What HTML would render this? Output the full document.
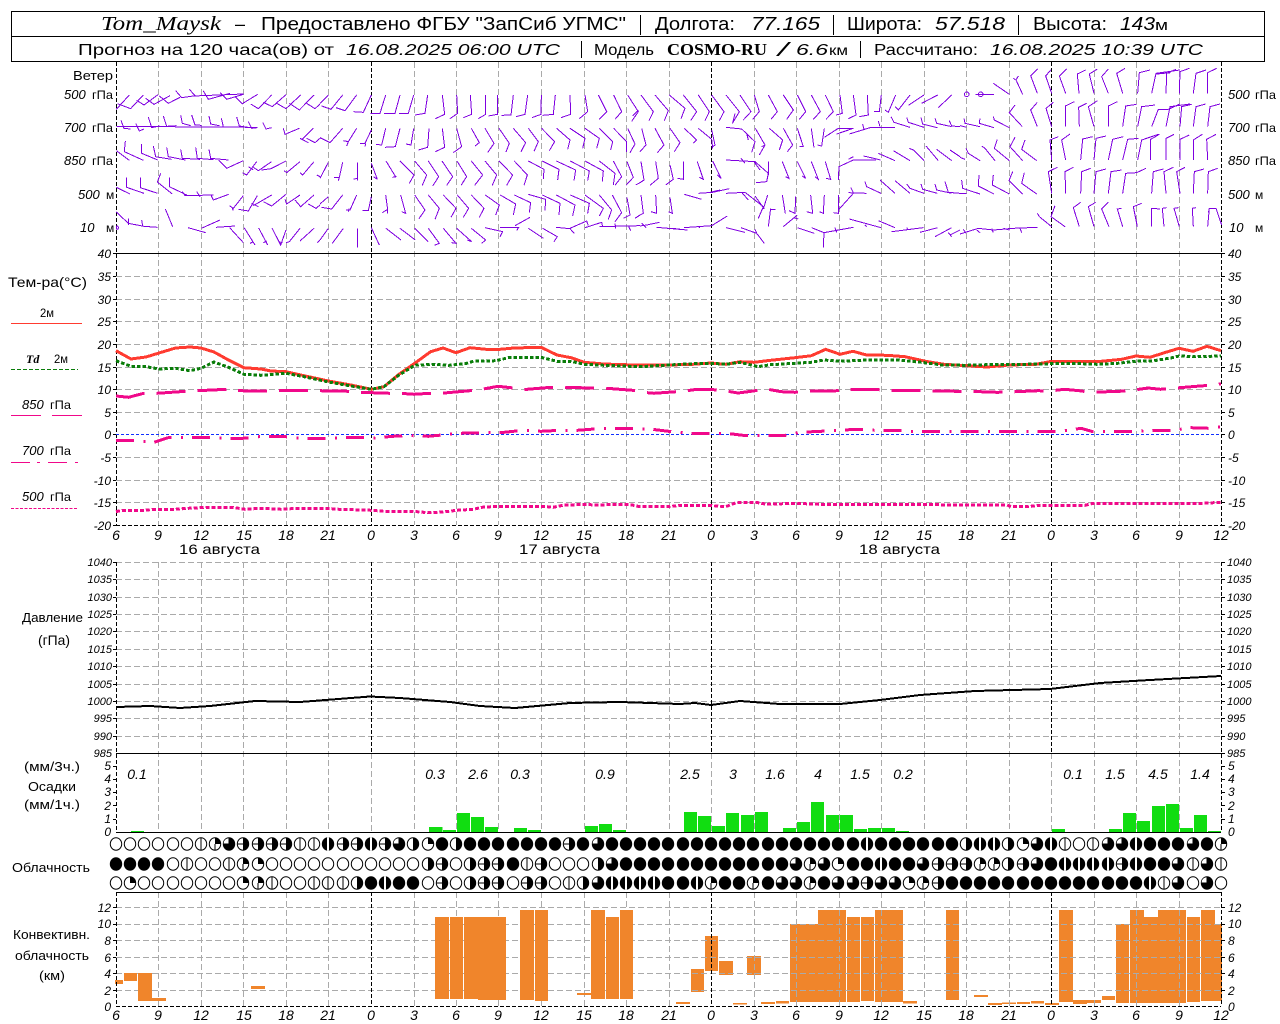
<!DOCTYPE html>
<html><head><meta charset="utf-8"><title>Tom_Maysk</title>
<style>
html,body{margin:0;padding:0;background:#fff}
svg{display:block}
text{font-family:"Liberation Sans",sans-serif;fill:#000}
.i{font-style:italic}
.s{font-family:"Liberation Serif",serif;font-style:italic}
.l{font-size:12px;font-style:italic}
.r{text-anchor:end}
.m{text-anchor:middle}
.x{font-size:14px;font-style:italic;text-anchor:middle}
.t{font-size:11px;font-style:italic}
.w{font-size:13px;font-style:italic}
.c{shape-rendering:crispEdges}
</style></head><body>
<svg width="1280" height="1024" viewBox="0 0 1280 1024" xmlns="http://www.w3.org/2000/svg">
<defs>
<g id="a"><ellipse rx="5.7" ry="6.2" fill="#fff" stroke="#000"/></g>
<g id="b"><ellipse rx="5.7" ry="6.2" fill="#fff" stroke="#000"/><path d="M0-6V6" stroke="#000"/></g>
<g id="c"><ellipse rx="5.7" ry="6.2" fill="#fff" stroke="#000"/><path d="M0 0V-6.2A5.7 6.2 0 0 1 5.7 0Z"/></g>
<g id="d"><ellipse rx="5.7" ry="6.2" fill="#fff" stroke="#000"/><path d="M0 0V-6.2A5.7 6.2 0 0 1 5.7 0Z"/><path d="M0 0V6" stroke="#000"/></g>
<g id="e"><ellipse rx="5.7" ry="6.2" fill="#fff" stroke="#000"/><path d="M0-6.2A5.7 6.2 0 0 1 0 6.2Z"/></g>
<g id="f"><ellipse rx="5.7" ry="6.2" fill="#fff" stroke="#000"/><path d="M0-6.2A5.7 6.2 0 0 1 0 6.2Z"/><path d="M-6 0H0" stroke="#000"/></g>
<g id="g"><ellipse rx="6.2" ry="6.7"/><path d="M-.5-.5V-5.8A5.2 5.2 0 0 0-5.4-.5Z" fill="#fff"/></g>
<g id="h"><ellipse rx="6.2" ry="6.7"/><rect x="-1" y="-6.7" width="2" height="13.4" fill="#fff"/></g>
<g id="i"><ellipse rx="6.2" ry="6.7"/></g>
</defs>

<!-- header -->
<rect x="11.5" y="11.5" width="1253" height="25" fill="none" stroke="#000"/>
<rect x="11.5" y="36.5" width="1253" height="25" fill="none" stroke="#000"/>
<g font-size="18">
<text class="s" x="101" y="30" textLength="120" lengthAdjust="spacingAndGlyphs" font-size="20">Tom_Maysk</text>
<text x="235" y="30">–</text>
<text x="261" y="30" textLength="365" lengthAdjust="spacingAndGlyphs">Предоставлено ФГБУ "ЗапСиб УГМС"</text>
<rect x="640" y="15" width="1" height="20"/>
<text x="655" y="30" textLength="80" lengthAdjust="spacingAndGlyphs">Долгота:</text>
<text class="i" x="751" y="30" textLength="69" lengthAdjust="spacingAndGlyphs">77.165</text>
<rect x="833" y="15" width="1" height="20"/>
<text x="847" y="30" textLength="75" lengthAdjust="spacingAndGlyphs">Широта:</text>
<text class="i" x="935" y="30" textLength="70" lengthAdjust="spacingAndGlyphs">57.518</text>
<rect x="1018" y="15" width="1" height="20"/>
<text x="1033" y="30" textLength="74" lengthAdjust="spacingAndGlyphs">Высота:</text>
<text class="i" x="1120" y="30" textLength="35" lengthAdjust="spacingAndGlyphs">143</text>
<text x="1155" y="30" font-size="15" textLength="13" lengthAdjust="spacingAndGlyphs">м</text>
</g>
<g font-size="16">
<text x="78" y="55" textLength="256" lengthAdjust="spacingAndGlyphs">Прогноз на 120 часа(ов)  от</text>
<text class="i" x="346" y="55" textLength="214" lengthAdjust="spacingAndGlyphs">16.08.2025 06:00 UTC</text>
<rect x="581" y="41" width="1" height="17"/>
<text x="594" y="55" textLength="60" lengthAdjust="spacingAndGlyphs">Модель</text>
<text x="667" y="55" textLength="100" lengthAdjust="spacingAndGlyphs" font-size="17" style="font-family:'Liberation Serif',serif;font-weight:bold">COSMO-RU</text>
<text x="778" y="56" font-size="19" class="i" textLength="10" lengthAdjust="spacingAndGlyphs">/</text>
<text class="i" x="796" y="55" textLength="32" lengthAdjust="spacingAndGlyphs">6.6</text>
<text x="829" y="55" font-size="14" textLength="19" lengthAdjust="spacingAndGlyphs">км</text>
<rect x="860" y="41" width="1" height="17"/>
<text x="874" y="55" textLength="104" lengthAdjust="spacingAndGlyphs">Рассчитано:</text>
<text class="i" x="990" y="55" textLength="213" lengthAdjust="spacingAndGlyphs">16.08.2025 10:39 UTC</text>
</g>

<!-- grid -->
<path class="c" fill="none" stroke="#aaa" stroke-dasharray="6 3" d="M158.5 62V525M201.5 62V525M243.5 62V525M286.5 62V525M328.5 62V525M414.5 62V525M456.5 62V525M498.5 62V525M541.5 62V525M584.5 62V525M626.5 62V525M669.5 62V525M754.5 62V525M796.5 62V525M839.5 62V525M881.5 62V525M924.5 62V525M966.5 62V525M1009.5 62V525M1094.5 62V525M1136.5 62V525M1179.5 62V525
M158.5 562V832M201.5 562V832M243.5 562V832M286.5 562V832M328.5 562V832M414.5 562V832M456.5 562V832M498.5 562V832M541.5 562V832M584.5 562V832M626.5 562V832M669.5 562V832M754.5 562V832M796.5 562V832M839.5 562V832M881.5 562V832M924.5 562V832M966.5 562V832M1009.5 562V832M1094.5 562V832M1136.5 562V832M1179.5 562V832M371.5 753V832M711.5 753V832M1051.5 753V832"/>

<!-- convective bars below grid (right part) -->
<g fill="#f0852b" class="c">
<rect x="676" y="1002" width="14" height="2"/><rect x="691" y="969" width="13" height="23"/><rect x="705" y="936" width="13" height="35"/><rect x="719" y="961" width="14" height="14"/><rect x="733" y="1003" width="14" height="1.5"/><rect x="747" y="956" width="14" height="19"/><rect x="761" y="1002" width="14" height="2"/><rect x="776" y="1001" width="13" height="2.5"/>
<rect x="790" y="924" width="28" height="78"/><rect x="818" y="910" width="28" height="92"/><rect x="847" y="917" width="13" height="85"/><rect x="861" y="917" width="13" height="84"/><rect x="875" y="910" width="28" height="92"/><rect x="903" y="1001" width="14" height="2.5"/>
<rect x="946" y="910" width="13" height="90"/><rect x="974" y="995" width="14" height="2"/><rect x="988" y="1003" width="14" height="2"/><rect x="1002" y="1002.5" width="14" height="1.5"/><rect x="1017" y="1002" width="13" height="2"/><rect x="1031" y="1001" width="13" height="2.5"/><rect x="1045" y="1003" width="14" height="2"/>
<rect x="1059" y="910" width="14" height="92"/><rect x="1073" y="1000" width="14" height="4"/><rect x="1087" y="1000" width="14" height="3"/><rect x="1102" y="996" width="13" height="4"/>
<rect x="1116" y="924" width="13" height="79"/><rect x="1130" y="910" width="14" height="93"/><rect x="1144" y="917" width="14" height="86"/><rect x="1158" y="910" width="28" height="93"/><rect x="1187" y="917" width="13" height="85"/><rect x="1201" y="910" width="14" height="91"/><rect x="1215" y="924" width="7" height="77"/>
</g>
<path class="c" fill="none" stroke="#aaa" stroke-dasharray="6 3" d="M158.5 892V1006M201.5 892V1006M243.5 892V1006M286.5 892V1006M328.5 892V1006M414.5 892V1006M456.5 892V1006M498.5 892V1006M541.5 892V1006M584.5 892V1006M626.5 892V1006M669.5 892V1006M754.5 892V1006M796.5 892V1006M839.5 892V1006M881.5 892V1006M924.5 892V1006M966.5 892V1006M1009.5 892V1006M1094.5 892V1006M1136.5 892V1006M1179.5 892V1006"/>
<path class="c" fill="none" stroke="#aaa" stroke-dasharray="6 3" d="M116 276.5H1221M116 299.5H1221M116 321.5H1221M116 344.5H1221M116 367.5H1221M116 389.5H1221M116 412.5H1221M116 457.5H1221M116 480.5H1221M116 502.5H1221
M116 562.5H1221M116 579.5H1221M116 597.5H1221M116 614.5H1221M116 631.5H1221M116 649.5H1221M116 666.5H1221M116 684.5H1221M116 701.5H1221M116 718.5H1221M116 736.5H1221
M116 907.5H1221M116 924.5H1221M116 940.5H1221M116 957.5H1221M116 973.5H1221M116 990.5H1221"/>
<!-- convective bars above grid (left part) -->
<g fill="#f0852b" class="c">
<rect x="115" y="980" width="8" height="4"/><rect x="124" y="973" width="13" height="8"/><rect x="138" y="973" width="14" height="28"/><rect x="152" y="998" width="14" height="3"/><rect x="251" y="986" width="14" height="3"/>
<rect x="435" y="917" width="14" height="82"/><rect x="450" y="917" width="13" height="82"/><rect x="464" y="917" width="14" height="82"/><rect x="478" y="917" width="28" height="83"/>
<rect x="520" y="910" width="14" height="90"/><rect x="535" y="910" width="13" height="91"/><rect x="577" y="993" width="14" height="2"/><rect x="591" y="910" width="14" height="89"/><rect x="606" y="917" width="13" height="82"/><rect x="620" y="910" width="13" height="89"/>
</g>
<!-- axes -->
<path class="c" fill="none" stroke="#000" stroke-dasharray="4 2" d="M116.5 62V525M116.5 562V832M116.5 892V1006M1221.5 62V525M1221.5 562V832M1221.5 892V1006M371.5 62V525M371.5 562V753M371.5 892V1006M711.5 62V525M711.5 562V753M711.5 892V1006M1051.5 62V525M1051.5 562V753M1051.5 892V1006M116 525.5H1221M116 1006.5H1221"/>
<path class="c" stroke="#000" d="M116 253.5H1221M116 753.5H1221M116 832.5H1221M116 892.5H1221"/>
<path class="c" stroke="#000" d="M113 253.5h3M113 276.5h3M113 299.5h3M113 321.5h3M113 344.5h3M113 367.5h3M113 389.5h3M113 412.5h3M113 434.5h3M113 457.5h3M113 480.5h3M113 502.5h3M1221 253.5h4M1221 276.5h4M1221 299.5h4M1221 321.5h4M1221 344.5h4M1221 367.5h4M1221 389.5h4M1221 412.5h4M1221 434.5h4M1221 457.5h4M1221 480.5h4M1221 502.5h4M1221 525.5h4M113 525.5h3
M113 562.5h3M113 579.5h3M113 597.5h3M113 614.5h3M113 631.5h3M113 649.5h3M113 666.5h3M113 684.5h3M113 701.5h3M113 718.5h3M113 736.5h3M1221 562.5h4M1221 579.5h4M1221 597.5h4M1221 614.5h4M1221 631.5h4M1221 649.5h4M1221 666.5h4M1221 684.5h4M1221 701.5h4M1221 718.5h4M1221 736.5h4M1221 753.5h4
M113 766.5h3M113 779.5h3M113 792.5h3M113 805.5h3M113 819.5h3M1221 766.5h4M1221 779.5h4M1221 792.5h4M1221 805.5h4M1221 819.5h4
M113 907.5h3M113 924.5h3M113 940.5h3M113 957.5h3M113 973.5h3M113 990.5h3M1221 907.5h4M1221 924.5h4M1221 940.5h4M1221 957.5h4M1221 973.5h4M1221 990.5h4"/>

<!-- wind barbs -->
<g class="c" fill="none" stroke="#7f00e0" stroke-width="3" stroke-linejoin="miter">
<g transform="translate(0,60) scale(.33333)">
<path d="M349 148L388 105M352 131L392 146L430 105M410 121L432 135L474 104M437 115L462 133L510 107M478 108L505 130L540 112M527 92L545 113L580 108L730 102M568 88L585 107M610 93L625 118L690 100M660 98L680 118L730 103M705 110L727 131L773 103M752 132L775 146L815 105M790 127L817 140L858 104M830 130L858 146L902 105M868 130L898 150L942 105M920 130L945 146L960 132"/>
<path d="M349 199L770 202M363 181L372 205L392 207M407 190L418 213L432 207M445 171L455 203L478 198M490 168L500 199L530 197M542 166L547 190L572 197M575 165L585 195L604 196M627 168L632 192L658 197M664 175L670 200M710 171L718 198L750 203M745 185L755 205L772 203M788 187L798 207L815 203M850 205L855 223L898 205M905 240L940 205M900 235L925 248M920 235L945 248L960 235"/>
<path d="M349 272L388 301M376 243L373 275L430 301M425 252L425 280L473 300M460 258L467 290L515 298M500 262L505 290L556 300M542 268L547 295L600 298M587 262L592 295L640 299M627 268L632 295L686 300M656 300L680 325L730 302M727 338L740 345L770 305M745 320L760 330M760 322L775 332L815 305M785 330L813 326L858 303M852 332L860 338L900 305M900 338L908 345L942 305M950 345L960 350"/>
<path d="M349 382L390 402M380 352L380 382L432 400M421 353L421 383L473 400M482 340L472 366L517 402M508 353L508 380L560 405M547 395L555 407L640 405M590 395L600 410M632 403L640 420L686 403M688 437L700 445L730 407M695 440L700 452M716 448L745 453L772 407M755 430L775 440M760 437L815 405M790 425L815 438L858 403M855 418L860 432L900 405M885 420L902 440L942 405M925 432L948 445L960 435"/>
<path d="M349 456L385 490L432 499L473 502M385 475L385 495M425 480L428 497M496 447L518 500M564 503L617 518M604 505L660 480M648 502L705 498M689 503L730 548M733 504L765 555M750 550L760 545M776 504L803 555M790 548L800 543M816 504L842 555L858 510M835 545L847 548M858 548L868 545L900 505M900 543L942 505M952 548L960 540"/>
<ellipse cx="352" cy="503" rx="3" ry="5"/>
</g>
<g transform="translate(320,60) scale(.33333)">
<path d="M0 130L25 105M5 138L33 148L68 105M48 143L75 152L110 105M100 155L130 157L154 105M152 160L180 160L197 105M192 160L225 160L240 105M237 160L265 160L281 105M285 165L315 160L323 105M346 176L374 163L367 105M390 176L413 160L410 105M430 173L455 163L451 105M475 176L497 163L497 105M505 168L532 163L532 105M545 166L573 165L580 105M588 170L615 163L623 105M636 173L663 163L664 105M668 166L700 163L706 105M723 173L752 163L750 105M778 176L803 155L795 105M838 178L860 155L835 105M885 178L905 155L881 105M935 184L955 155L923 105M938 168L955 150"/>
<path d="M0 233L30 248L68 205M70 242L85 245L110 205M80 258L85 245M120 250L135 250L154 210M135 260L137 250M168 253L185 255L197 205M195 262L226 260L240 205M258 252L273 255L281 205M295 270L323 262L327 205M346 275L374 262L367 205M400 278L425 260L410 205M465 258L478 248L454 205M503 278L522 250L495 205M558 276L568 250L537 205M603 275L617 248L580 205M642 274L655 245L625 205M688 272L704 245L665 205M743 268L750 240L710 205M788 265L795 235L750 205M830 265L838 235L795 205M872 270L878 245L838 205M920 276L920 245L881 205M930 278L945 252L923 205"/>
<path d="M0 355L25 307M42 352L58 352L68 307M55 362L58 352M100 358L112 355M112 362L112 307M154 310L172 358M160 350L172 358M198 303L228 352M217 352L230 350M240 303L282 345L268 370M284 303L320 345L307 376M325 303L356 350L338 378M366 303L398 350L380 376M411 303L440 350L423 376M454 303L488 345L464 376M495 303L530 345L517 376M537 303L578 345L560 376M583 303L622 345L612 376M625 303L672 328L670 357M667 303L717 328L713 360M709 303L767 330L762 362M751 303L808 333L803 362M795 303L850 333L847 365M838 303L885 340L880 375M880 303L905 350L885 376M921 305L940 352L918 376M947 375L960 368"/>
<path d="M0 432L25 410M5 442L35 447L68 405M78 450L90 450L110 405M85 455L88 445M127 452L145 452L154 410M187 458L203 448L197 405M203 448L203 460M242 405L257 460L245 455M284 405L315 450L297 476M325 405L358 445L345 478M370 405L408 445L393 472M412 405L446 445L430 472M454 405L492 445L478 472M496 405L538 435L527 465M541 405L587 432L580 465M583 405L632 428L628 458M625 403L677 418L675 452M667 405L720 430L717 465M709 405L765 435L758 468M751 405L808 430L803 460M795 405L850 445L838 468M838 405L875 450L865 478M877 405L905 458L885 485M921 412L930 465L910 475M945 475L960 465"/>
<path d="M0 540L25 505M37 550L70 505M112 505L112 563M154 503L178 555M198 505L243 540M240 505L286 540M284 505L325 545M325 505L358 550L343 556M370 505L408 550L395 548M410 505L455 545L442 540M454 505L497 540L485 550M495 503L548 515L540 530M540 502L596 502L590 512M585 497L630 472M625 505L670 535M668 505L712 530L702 545M708 502L750 506L763 520M750 505L800 483L805 497M795 503L845 487L848 500M838 500L960 497M885 490L887 505M925 497L932 512"/>
</g>
<g transform="translate(640,60) scale(.33333)">
<path d="M3 105L40 155L27 182M45 105L85 152L73 182M88 105L135 145L123 176M130 105L170 155L152 182M175 105L208 155L195 182M215 105L252 155L238 182M258 105L298 155L277 190M285 160L278 190M300 105L333 155L310 180M343 105L358 155L338 178M385 105L412 155L393 178M430 105L460 150L440 178M472 105L497 155L478 178M514 105L541 155L520 178M556 105L580 155L558 178M600 105L607 160L588 165M640 105L648 165L625 176M682 105L685 165L658 170M724 105L718 155L702 155M767 105L745 157L735 150M810 105L775 150L765 140M852 105L805 136M893 105L845 130M935 105L895 143"/>
<path d="M5 205L18 255L0 275M45 205L72 255L52 278M90 205L120 248L103 275M133 205L170 240L160 250M175 205L215 238L218 265M215 210L225 255L215 262M258 202L305 207L345 245L335 277M320 220L325 240M346 205L375 255L358 285M365 260L375 255M388 205L428 240L418 270M430 205L458 255L442 275M472 205L490 260L478 260M514 205L522 263M553 205L545 258L532 255M553 232L595 205L640 205M590 222L640 205M628 222L690 203L765 203M668 192L672 208M715 183L720 200M753 170L762 187L810 202M800 172L805 187L852 202M843 172L848 192L892 203M885 175L890 190L935 200M928 182L935 198L960 200"/>
<path d="M3 305L12 360L0 368M47 305L55 355L30 376M90 315L100 358L77 375M130 305L130 358L113 355M172 305L190 358L178 352M218 303L243 355L232 345M258 300L345 305L385 340L380 365L348 368M303 295L315 310M342 305L360 330M385 305L385 345M427 305L447 355L437 350M472 305L497 355L487 348M514 305L535 358L525 350M556 305L572 358L558 355M595 360L597 320L640 300L708 300M625 298L640 290M670 288L680 290L722 300M715 280L765 302M760 272L765 275L810 302M808 265L820 270L852 302M858 258L895 302M890 268L935 302M930 270L960 290"/>
<path d="M3 405L10 460L0 465M47 405L50 460L33 455M90 412L97 460L85 455M133 403L185 418M175 400L218 397L268 386M210 397L240 390M258 400L315 397L370 440L355 475M305 397L325 420M345 408L373 447M383 405L370 447M392 445L385 500M392 448L407 448M427 405L436 460M467 410L465 460L447 452M512 405L518 460L500 455M553 405L550 460L538 455M640 400L595 450L595 460L580 458M595 405L595 450M625 398L680 400M632 382L640 398M675 365L680 380L723 400M720 360L765 400M765 362L810 400M800 372L810 385L852 400M843 372L848 388L892 400M885 372L890 390L935 400M915 365L925 397L960 400"/>
<path d="M0 498L20 495L58 487M5 490L18 503M50 502L142 510M85 505L120 507M132 503L215 497L262 468M175 500L180 503M258 503L315 517M303 503L350 520L373 550M345 508L350 520M472 503L523 520M515 503L552 518L550 563M552 518L640 502M585 503L590 517M430 500L472 465M460 473L475 477M628 477L723 503M675 495L680 500M715 482L765 503M755 515L850 503M800 503L805 510M840 517L893 503M885 530L935 503M925 518L935 530M930 525L960 510"/>
</g>
<g transform="translate(960,60) scale(.33333)">
<circle cx="20" cy="103" r="7"/><circle cx="62" cy="103" r="7"/>
<path d="M47 103L102 103M100 70L148 103M188 103L168 60L175 48M160 55L168 60M232 100L212 47L233 27M275 100L257 48L272 30M317 100L298 48L320 27M357 100L352 42L377 30M402 100L388 42L412 27M445 100L425 50L445 27M488 100L470 40L495 25M533 100L538 38L570 30M575 100L588 40L660 30M590 42L632 38M618 100L620 40L648 28M658 100L660 35L688 25M700 100L708 40L738 30M743 100L743 38L770 25"/>
<path d="M187 200L148 158L165 135M232 200L212 150L232 127M275 200L258 145L280 127M317 200L316 138L343 125M358 200L356 142L380 130M402 200L385 140L412 122M445 200L445 138L472 125M488 200L497 138L530 133M533 200L545 140L585 135M575 200L595 148L625 148L660 132M618 200L630 140L690 132M660 200L665 140L695 133M700 200L708 140L737 132M743 200L750 140L780 132M100 170L103 180L148 203M60 175L58 190L102 203M12 175L15 190L60 200M0 197L20 202"/>
<path d="M0 292L15 298M18 265L25 280L60 302M65 258L75 265L105 302M112 238L103 265L148 302M165 232L150 260L188 302M195 240L185 268L230 302M275 300L270 240L295 230M317 300L305 240L330 222M362 300L368 237L398 230M402 300L408 235L438 228M445 300L458 238L490 230M488 300L503 238L535 235M533 300L545 240L595 223M572 300L572 238L598 223M618 300L618 235L642 223M660 300L660 238L688 225M700 300L700 240L727 223M743 300L740 238L768 223"/>
<path d="M0 400L20 400M5 360L8 385L60 402M57 345L55 378L102 402M100 345L97 375L148 402M158 335L147 362L188 402M193 338L185 370L230 402M275 400L265 335L292 322M317 400L315 335L340 322M362 400L365 335L392 325M402 400L408 335L438 327M445 400L453 335L485 330M488 400L497 340L530 338L558 325M575 400L580 335L610 327M618 400L612 335L640 322M660 400L650 335L675 322M700 400L703 335L732 327M743 400L745 335L773 325"/>
<path d="M0 522L55 505L100 510L160 505L232 502M50 510L60 518M95 505L100 518M130 505L148 510M180 505L185 518M10 508L18 520M232 460L238 470L275 500M285 437L273 470L315 500M358 500L340 443L362 427M402 500L385 440L407 427M447 500L425 447L445 427M488 500L472 447L485 445M532 500L520 440L545 430M575 500L575 445L600 447M612 500L607 445L620 443M658 500L642 445L655 443M700 500L697 445L708 443M743 500L748 445L768 445L785 495M748 445L745 458"/>
</g>
</g>

<!-- temperature curves -->
<path class="c" d="M116 434.5H1221" stroke="#1030ff" stroke-dasharray="3 2"/>
<g class="c">
<polyline fill="none" stroke="#ff3b30" stroke-width="3" points="116,350.7 131,359 146,357 159,353 175.5,348 190,347 201,348 214,352 228.5,360 244,367.7 261,369 271,371 286,371.7 304,375.7 328.5,381 351,385 371.4,389.3 384,386.7 398,375 414.7,363.3 430.6,351.7 443,348 456,352.7 470,347.7 486,349.3 500,349.3 514,348 541,347.3 557,355 571,357.7 584.5,362.3 604,364 624,364.7 640,365 669,365 693,364.3 711,363 726,364.3 740,361.7 754,362.3 770.6,360.3 795,357.7 811.4,355.7 825.7,349.3 840,354.3 853,351.3 866.5,355 887,355.3 905,356.7 925.7,361.3 944,364.3 966.5,365.7 987,367 1009.4,365 1036,364.3 1051.4,361.3 1072.7,361.3 1097,361.7 1121.6,359.3 1136,356 1150,357.3 1164.5,352.7 1179,348.3 1193,351.3 1207,346.3 1221,350.7"/>
<polyline fill="none" stroke="#0a7d0a" stroke-width="3" stroke-dasharray="3.5 2" points="116,360.7 131,366.3 146,366.7 159,369 175.5,368.3 190,370.7 201,368.3 214,362 228.5,367.3 244,374.3 261,375.3 286,373.3 304,376.7 328.5,382 351,386 371.4,389.3 384,386.7 398,375.7 414.7,365.3 432.6,364.3 449,365.3 465,363.7 473.5,361.3 496,360.7 510,357.3 541,357.3 557,361.3 571,361.3 584.5,364.3 604,365.3 640,366.7 669,365 693,363.7 711,363.3 726,364.3 740,362.3 758,366.7 770.6,364.7 795,363.3 811,362.3 824,360 840,361.3 868.6,360 897,360 921.6,362.3 942,365 966.5,365.3 987,364.7 1009.4,364.7 1051.4,363.7 1072.7,363.3 1097,364.3 1117.6,363.3 1136,361.3 1154,360.7 1170.6,358 1179,356 1195,356.7 1221,356"/>
<polyline fill="none" stroke="#f0088a" stroke-width="3" stroke-dasharray="29 12" points="116,396 128.6,397.3 143.7,393.3 157,393.3 185.7,391.3 198,390.7 226.5,389.3 237.5,390.7 267,391 278,390.7 308,390.7 319,390.7 349,391.3 360,392.3 390,393.3 400,393.3 414,394.3 429.4,393.3 441,393.3 470,390.7 481.6,389.3 498,386.3 511,387.7 522.4,389.7 551,387.3 562.4,387.3 592,388 603,388 632.6,390.3 643,392.3 654,393.3 672,392 685,391 697,389.3 713.5,389.7 726,391 738,393 753.5,391 766.5,389 781,391.7 795,392.3 805,391 834,391 848,389.3 875,389.3 887,390.7 917.5,390.7 928,390.7 956,391.3 968.6,391.3 997,392.3 1009.4,392 1038,390.7 1050,391 1064.5,389.3 1079,390.7 1091,392.3 1119.6,391.3 1132,390.3 1148,388 1160.4,389.3 1172.6,388.3 1200,386 1213.5,385 1221,383.7"/>
<polyline fill="none" stroke="#f0088a" stroke-width="3" stroke-dasharray="18 9.5 2 9" points="116,440.3 134,440.3 154,442.3 169.4,437.3 188,437.3 206,437.3 225,438.3 243,438.3 263,436.3 281.6,436.3 301,438.3 317.6,438.7 339,437.7 355,437.3 374.7,438 392.6,436.3 411.4,435.7 428.6,436.3 449,434.3 465.3,433 486,432.7 504,432.3 523,430.3 541,431.3 560,430.3 577.6,430.3 598,428.7 614,428.7 640,428.7 652,429.3 672,431.7 689,433.3 709,433.3 726.5,433.3 746,435.7 762.4,435.7 783.7,435.7 800,432.3 821,431.3 837.5,430.3 858,429.3 874.7,430.3 895,430.3 911.4,431.3 1060.4,431.3 1081,428.3 1093,431.7 1134,431.3 1154,430.7 1170.6,430.7 1191,427.7 1209,428.3 1221,426.7"/>
<polyline fill="none" stroke="#f0088a" stroke-width="3" stroke-dasharray="4 2" points="116,511.7 122,510.3 145,510.3 153,509.3 175.5,509.3 188,508.3 206,507.3 232.6,507.3 245,509.3 261,508.3 281.6,509.3 298,508.3 326.5,508.3 339,509.3 371.4,510.3 383.7,511.3 412,511.3 428.6,512.7 443,512 457,510.3 473.5,509.3 481.6,507.3 498,506.3 547,506.7 553,507.3 563,505.3 583.7,504.3 600,505.3 612,504.3 628.6,504.3 640,506.7 668.6,506.7 681,505.3 709.4,505.3 725.7,506.7 736,502.7 756,502.3 766.5,504.3 795,503.3 819.6,504.3 1007,505 1011,506.7 1028,506.7 1038,505.3 1085,505.3 1093,503.3 1203,503.3 1221,502.3"/>

<!-- pressure -->
<polyline fill="none" stroke="#000" stroke-width="2" points="116,707 150,706 180,708 210,706 255,701 300,702 370,696.5 400,698 450,702 480,706 515,708 570,703 620,702 680,704 695,703 711,705 740,701 780,704 840,704 880,700 920,695 975,691 1050,689 1100,683 1150,680 1221,676"/>
</g>

<!-- precipitation bars -->
<g fill="#11dd11" class="c">
<rect x="131" y="831" width="13" height="1.5"/><rect x="429" y="827" width="13.5" height="5.5"/><rect x="443" y="830" width="13" height="2.5"/><rect x="457" y="813" width="13" height="19.5"/><rect x="471" y="817" width="13" height="15.5"/><rect x="485" y="827" width="13" height="5.5"/><rect x="514" y="828" width="13" height="4.5"/><rect x="528" y="830" width="13" height="2.5"/><rect x="585" y="826" width="13" height="6.5"/><rect x="599" y="824" width="13" height="8.5"/><rect x="613" y="830" width="13" height="2.5"/>
<rect x="684" y="812" width="13" height="20.5"/><rect x="698" y="816" width="13" height="16.5"/><rect x="712" y="826" width="13" height="6.5"/><rect x="726" y="813" width="13" height="19.5"/><rect x="741" y="815" width="13" height="17.5"/><rect x="755" y="812" width="13" height="20.5"/><rect x="783" y="828" width="13" height="4.5"/><rect x="797" y="822" width="13" height="10.5"/><rect x="811" y="802" width="13" height="30.5"/><rect x="826" y="815" width="13" height="17.5"/><rect x="840" y="815" width="13" height="17.5"/><rect x="854" y="829" width="13" height="3.5"/><rect x="868" y="828" width="13" height="4.5"/><rect x="882" y="828" width="13" height="4.5"/><rect x="896" y="831" width="13" height="1.5"/>
<rect x="1052" y="829" width="13" height="3.5"/><rect x="1109" y="829" width="13" height="3.5"/><rect x="1123" y="813" width="13" height="19.5"/><rect x="1137" y="821" width="13" height="11.5"/><rect x="1152" y="806" width="13" height="26.5"/><rect x="1166" y="804" width="13" height="28.5"/><rect x="1180" y="828" width="13" height="4.5"/><rect x="1194" y="815" width="13" height="17.5"/><rect x="1208" y="831" width="13" height="1.5"/>
</g>
<path class="c" stroke="#000" d="M116 832.5H1221"/>

<!-- cloud rows -->
<g transform="translate(0,844)"><use href="#a" x="116"/><use href="#a" x="130"/><use href="#a" x="144"/><use href="#a" x="158"/><use href="#a" x="173"/><use href="#a" x="187"/><use href="#b" x="201"/><use href="#d" x="215"/><use href="#g" x="229"/><use href="#f" x="243"/><use href="#f" x="258"/><use href="#f" x="272"/><use href="#f" x="286"/><use href="#b" x="300"/><use href="#b" x="314"/><use href="#h" x="328"/><use href="#f" x="343"/><use href="#f" x="357"/><use href="#h" x="371"/><use href="#f" x="385"/><use href="#g" x="399"/><use href="#e" x="413"/><use href="#c" x="428"/><use href="#i" x="442"/><use href="#e" x="456"/><use href="#i" x="470"/><use href="#i" x="484"/><use href="#i" x="498"/><use href="#i" x="513"/><use href="#i" x="527"/><use href="#i" x="541"/><use href="#i" x="555"/><use href="#f" x="569"/><use href="#i" x="583"/><use href="#g" x="598"/><use href="#i" x="612"/><use href="#i" x="626"/><use href="#i" x="640"/><use href="#i" x="654"/><use href="#i" x="668"/><use href="#i" x="683"/><use href="#i" x="697"/><use href="#i" x="711"/><use href="#i" x="725"/><use href="#i" x="739"/><use href="#i" x="753"/><use href="#i" x="768"/><use href="#i" x="782"/><use href="#i" x="796"/><use href="#i" x="810"/><use href="#i" x="824"/><use href="#i" x="838"/><use href="#i" x="853"/><use href="#h" x="867"/><use href="#i" x="881"/><use href="#i" x="895"/><use href="#i" x="909"/><use href="#i" x="923"/><use href="#i" x="938"/><use href="#i" x="952"/><use href="#e" x="966"/><use href="#h" x="980"/><use href="#h" x="994"/><use href="#e" x="1008"/><use href="#c" x="1023"/><use href="#g" x="1037"/><use href="#h" x="1051"/><use href="#b" x="1065"/><use href="#a" x="1079"/><use href="#b" x="1093"/><use href="#g" x="1108"/><use href="#g" x="1122"/><use href="#h" x="1136"/><use href="#i" x="1150"/><use href="#i" x="1164"/><use href="#i" x="1178"/><use href="#g" x="1193"/><use href="#i" x="1207"/><use href="#d" x="1221"/></g>
<g transform="translate(0,864)"><use href="#i" x="116"/><use href="#i" x="130"/><use href="#i" x="144"/><use href="#i" x="158"/><use href="#a" x="173"/><use href="#b" x="187"/><use href="#a" x="201"/><use href="#a" x="215"/><use href="#b" x="229"/><use href="#d" x="243"/><use href="#c" x="258"/><use href="#a" x="272"/><use href="#a" x="286"/><use href="#a" x="300"/><use href="#a" x="314"/><use href="#a" x="328"/><use href="#a" x="343"/><use href="#a" x="357"/><use href="#a" x="371"/><use href="#a" x="385"/><use href="#a" x="399"/><use href="#a" x="413"/><use href="#e" x="428"/><use href="#f" x="442"/><use href="#a" x="456"/><use href="#e" x="470"/><use href="#f" x="484"/><use href="#f" x="498"/><use href="#i" x="513"/><use href="#b" x="527"/><use href="#f" x="541"/><use href="#a" x="555"/><use href="#a" x="569"/><use href="#a" x="583"/><use href="#e" x="598"/><use href="#g" x="612"/><use href="#i" x="626"/><use href="#i" x="640"/><use href="#i" x="654"/><use href="#i" x="668"/><use href="#i" x="683"/><use href="#i" x="697"/><use href="#i" x="711"/><use href="#i" x="725"/><use href="#i" x="739"/><use href="#i" x="753"/><use href="#i" x="768"/><use href="#i" x="782"/><use href="#g" x="796"/><use href="#d" x="810"/><use href="#g" x="824"/><use href="#c" x="838"/><use href="#i" x="853"/><use href="#i" x="867"/><use href="#h" x="881"/><use href="#i" x="895"/><use href="#i" x="909"/><use href="#g" x="923"/><use href="#f" x="938"/><use href="#f" x="952"/><use href="#f" x="966"/><use href="#d" x="980"/><use href="#d" x="994"/><use href="#e" x="1008"/><use href="#f" x="1023"/><use href="#g" x="1037"/><use href="#i" x="1051"/><use href="#h" x="1065"/><use href="#h" x="1079"/><use href="#h" x="1093"/><use href="#h" x="1108"/><use href="#f" x="1122"/><use href="#h" x="1136"/><use href="#i" x="1150"/><use href="#i" x="1164"/><use href="#g" x="1178"/><use href="#b" x="1193"/><use href="#g" x="1207"/><use href="#b" x="1221"/></g>
<g transform="translate(0,883)"><use href="#a" x="116"/><use href="#c" x="130"/><use href="#a" x="144"/><use href="#a" x="158"/><use href="#a" x="173"/><use href="#a" x="187"/><use href="#a" x="201"/><use href="#a" x="215"/><use href="#a" x="229"/><use href="#c" x="243"/><use href="#d" x="258"/><use href="#b" x="272"/><use href="#a" x="286"/><use href="#a" x="300"/><use href="#b" x="314"/><use href="#b" x="328"/><use href="#b" x="343"/><use href="#e" x="357"/><use href="#i" x="371"/><use href="#h" x="385"/><use href="#i" x="399"/><use href="#i" x="413"/><use href="#a" x="428"/><use href="#f" x="442"/><use href="#a" x="456"/><use href="#e" x="470"/><use href="#f" x="484"/><use href="#f" x="498"/><use href="#a" x="513"/><use href="#f" x="527"/><use href="#f" x="541"/><use href="#a" x="555"/><use href="#b" x="569"/><use href="#e" x="583"/><use href="#g" x="598"/><use href="#h" x="612"/><use href="#h" x="626"/><use href="#h" x="640"/><use href="#h" x="654"/><use href="#i" x="668"/><use href="#i" x="683"/><use href="#h" x="697"/><use href="#d" x="711"/><use href="#i" x="725"/><use href="#i" x="739"/><use href="#d" x="753"/><use href="#i" x="768"/><use href="#g" x="782"/><use href="#g" x="796"/><use href="#d" x="810"/><use href="#i" x="824"/><use href="#g" x="838"/><use href="#g" x="853"/><use href="#f" x="867"/><use href="#g" x="881"/><use href="#g" x="895"/><use href="#c" x="909"/><use href="#d" x="923"/><use href="#f" x="938"/><use href="#i" x="952"/><use href="#i" x="966"/><use href="#i" x="980"/><use href="#i" x="994"/><use href="#i" x="1008"/><use href="#i" x="1023"/><use href="#i" x="1037"/><use href="#i" x="1051"/><use href="#i" x="1065"/><use href="#i" x="1079"/><use href="#i" x="1093"/><use href="#i" x="1108"/><use href="#i" x="1122"/><use href="#i" x="1136"/><use href="#h" x="1150"/><use href="#b" x="1164"/><use href="#g" x="1178"/><use href="#a" x="1193"/><use href="#g" x="1207"/><use href="#a" x="1221"/></g>

<!-- wind labels -->
<text x="73" y="80" textLength="40" lengthAdjust="spacingAndGlyphs" font-size="13">Ветер</text>
<text x="64" y="99" class="w">500</text><text x="92" y="99" font-size="12" textLength="21" lengthAdjust="spacingAndGlyphs">гПа</text>
<text x="64" y="132" class="w">700</text><text x="92" y="132" font-size="12" textLength="21" lengthAdjust="spacingAndGlyphs">гПа</text>
<text x="64" y="165" class="w">850</text><text x="92" y="165" font-size="12" textLength="21" lengthAdjust="spacingAndGlyphs">гПа</text>
<text x="78" y="199" class="w">500</text><text x="106" y="199" font-size="12">м</text>
<text x="80" y="232" class="w">10</text><text x="106" y="232" font-size="12">м</text>
<text x="1228" y="99" class="w">500</text><text x="1255" y="99" font-size="12" textLength="21" lengthAdjust="spacingAndGlyphs">гПа</text>
<text x="1228" y="132" class="w">700</text><text x="1255" y="132" font-size="12" textLength="21" lengthAdjust="spacingAndGlyphs">гПа</text>
<text x="1228" y="165" class="w">850</text><text x="1255" y="165" font-size="12" textLength="21" lengthAdjust="spacingAndGlyphs">гПа</text>
<text x="1228" y="199" class="w">500</text><text x="1255" y="199" font-size="12">м</text>
<text x="1229" y="232" class="w">10</text><text x="1255" y="232" font-size="12">м</text>

<!-- temperature axis labels -->
<g class="l r">
<text class="l r" x="111" y="258">40</text><text class="l r" x="111" y="281">35</text><text class="l r" x="111" y="304">30</text><text class="l r" x="111" y="326">25</text><text class="l r" x="111" y="349">20</text><text class="l r" x="111" y="372">15</text><text class="l r" x="111" y="394">10</text><text class="l r" x="111" y="417">5</text><text class="l r" x="111" y="439">0</text><text class="l r" x="111" y="462">-5</text><text class="l r" x="111" y="485">-10</text><text class="l r" x="111" y="507">-15</text><text class="l r" x="111" y="530">-20</text>
</g>
<text class="l" x="1228" y="258">40</text><text class="l" x="1228" y="281">35</text><text class="l" x="1228" y="304">30</text><text class="l" x="1228" y="326">25</text><text class="l" x="1228" y="349">20</text><text class="l" x="1228" y="372">15</text><text class="l" x="1228" y="394">10</text><text class="l" x="1228" y="417">5</text><text class="l" x="1228" y="439">0</text><text class="l" x="1228" y="462">-5</text><text class="l" x="1228" y="485">-10</text><text class="l" x="1228" y="507">-15</text><text class="l" x="1228" y="530">-20</text>

<!-- temperature legend -->
<text x="8" y="287" font-size="14" textLength="79" lengthAdjust="spacingAndGlyphs">Тем-ра(°C)</text>
<text x="40" y="317" font-size="12" textLength="14" lengthAdjust="spacingAndGlyphs">2м</text>
<path class="c" d="M11 323.5H82" stroke="#ff3b30"/>
<text x="26" y="363" font-size="12" class="s" font-weight="bold">Td</text><text x="54" y="363" font-size="12" textLength="14" lengthAdjust="spacingAndGlyphs">2м</text>
<path class="c" d="M11 369.5H78" stroke="#0a7d0a" stroke-dasharray="4 2"/>
<text x="22" y="409" class="w">850</text><text x="50" y="409" font-size="12" textLength="21" lengthAdjust="spacingAndGlyphs">гПа</text>
<path class="c" d="M11 415.5H41M52 415.5H82" stroke="#f0088a"/>
<text x="22" y="455" class="w">700</text><text x="50" y="455" font-size="12" textLength="21" lengthAdjust="spacingAndGlyphs">гПа</text>
<path class="c" d="M11 462.5H30M37 462.5H40M48 462.5H67M75 462.5H78" stroke="#f0088a"/>
<text x="22" y="501" class="w">500</text><text x="50" y="501" font-size="12" textLength="21" lengthAdjust="spacingAndGlyphs">гПа</text>
<path class="c" d="M11 508.5H78" stroke="#f0088a" stroke-dasharray="3 1.5"/>

<!-- x labels -->
<g>
<text class="x" x="116" y="540">6</text><text class="x" x="158" y="540">9</text><text class="x" x="201" y="540">12</text><text class="x" x="244" y="540">15</text><text class="x" x="286" y="540">18</text><text class="x" x="328" y="540">21</text><text class="x" x="371" y="540">0</text><text class="x" x="414" y="540">3</text><text class="x" x="456" y="540">6</text><text class="x" x="498" y="540">9</text><text class="x" x="541" y="540">12</text><text class="x" x="584" y="540">15</text><text class="x" x="626" y="540">18</text><text class="x" x="669" y="540">21</text><text class="x" x="711" y="540">0</text><text class="x" x="754" y="540">3</text><text class="x" x="796" y="540">6</text><text class="x" x="839" y="540">9</text><text class="x" x="881" y="540">12</text><text class="x" x="924" y="540">15</text><text class="x" x="966" y="540">18</text><text class="x" x="1009" y="540">21</text><text class="x" x="1051" y="540">0</text><text class="x" x="1094" y="540">3</text><text class="x" x="1136" y="540">6</text><text class="x" x="1179" y="540">9</text><text class="x" x="1221" y="540">12</text>
<text class="x" x="116" y="1020">6</text><text class="x" x="158" y="1020">9</text><text class="x" x="201" y="1020">12</text><text class="x" x="244" y="1020">15</text><text class="x" x="286" y="1020">18</text><text class="x" x="328" y="1020">21</text><text class="x" x="371" y="1020">0</text><text class="x" x="414" y="1020">3</text><text class="x" x="456" y="1020">6</text><text class="x" x="498" y="1020">9</text><text class="x" x="541" y="1020">12</text><text class="x" x="584" y="1020">15</text><text class="x" x="626" y="1020">18</text><text class="x" x="669" y="1020">21</text><text class="x" x="711" y="1020">0</text><text class="x" x="754" y="1020">3</text><text class="x" x="796" y="1020">6</text><text class="x" x="839" y="1020">9</text><text class="x" x="881" y="1020">12</text><text class="x" x="924" y="1020">15</text><text class="x" x="966" y="1020">18</text><text class="x" x="1009" y="1020">21</text><text class="x" x="1051" y="1020">0</text><text class="x" x="1094" y="1020">3</text><text class="x" x="1136" y="1020">6</text><text class="x" x="1179" y="1020">9</text><text class="x" x="1221" y="1020">12</text>
</g>
<text x="179" y="554" font-size="14" textLength="81" lengthAdjust="spacingAndGlyphs">16 августа</text>
<text x="519" y="554" font-size="14" textLength="81" lengthAdjust="spacingAndGlyphs">17 августа</text>
<text x="859" y="554" font-size="14" textLength="81" lengthAdjust="spacingAndGlyphs">18 августа</text>

<!-- pressure labels -->
<g>
<text class="t r" x="112" y="566">1040</text><text class="t r" x="112" y="583">1035</text><text class="t r" x="112" y="601">1030</text><text class="t r" x="112" y="618">1025</text><text class="t r" x="112" y="635">1020</text><text class="t r" x="112" y="653">1015</text><text class="t r" x="112" y="670">1010</text><text class="t r" x="112" y="688">1005</text><text class="t r" x="112" y="705">1000</text><text class="t r" x="112" y="722">995</text><text class="t r" x="112" y="740">990</text><text class="t r" x="112" y="757">985</text>
<text class="t" x="1227" y="566">1040</text><text class="t" x="1227" y="583">1035</text><text class="t" x="1227" y="601">1030</text><text class="t" x="1227" y="618">1025</text><text class="t" x="1227" y="635">1020</text><text class="t" x="1227" y="653">1015</text><text class="t" x="1227" y="670">1010</text><text class="t" x="1227" y="688">1005</text><text class="t" x="1227" y="705">1000</text><text class="t" x="1227" y="722">995</text><text class="t" x="1227" y="740">990</text><text class="t" x="1227" y="757">985</text>
</g>
<text x="22" y="622" font-size="13" textLength="61" lengthAdjust="spacingAndGlyphs">Давление</text>
<text x="38" y="645" font-size="14" textLength="32" lengthAdjust="spacingAndGlyphs">(гПа)</text>

<!-- precip labels -->
<text x="24" y="771" font-size="13" textLength="56" lengthAdjust="spacingAndGlyphs">(мм/3ч.)</text>
<text x="28" y="791" font-size="13" textLength="48" lengthAdjust="spacingAndGlyphs">Осадки</text>
<text x="24" y="809" font-size="13" textLength="56" lengthAdjust="spacingAndGlyphs">(мм/1ч.)</text>
<g>
<text class="l r" x="111" y="770">5</text><text class="l r" x="111" y="783">4</text><text class="l r" x="111" y="796">3</text><text class="l r" x="111" y="810">2</text><text class="l r" x="111" y="823">1</text><text class="l r" x="111" y="836">0</text>
<text class="l" x="1228" y="770">5</text><text class="l" x="1228" y="783">4</text><text class="l" x="1228" y="796">3</text><text class="l" x="1228" y="810">2</text><text class="l" x="1228" y="823">1</text><text class="l" x="1228" y="836">0</text>
</g>
<g font-size="14" text-anchor="middle">
<text x="137" y="779" class="i">0.1</text><text x="435" y="779" class="i">0.3</text><text x="478" y="779" class="i">2.6</text><text x="520" y="779" class="i">0.3</text><text x="605" y="779" class="i">0.9</text><text x="690" y="779" class="i">2.5</text><text x="733" y="779" class="i">3</text><text x="775" y="779" class="i">1.6</text><text x="818" y="779" class="i">4</text><text x="860" y="779" class="i">1.5</text><text x="903" y="779" class="i">0.2</text><text x="1073" y="779" class="i">0.1</text><text x="1115" y="779" class="i">1.5</text><text x="1158" y="779" class="i">4.5</text><text x="1200" y="779" class="i">1.4</text>
</g>

<text x="12" y="872" font-size="13" textLength="78" lengthAdjust="spacingAndGlyphs">Облачность</text>

<!-- convective labels -->
<text x="13" y="939" font-size="13" textLength="77" lengthAdjust="spacingAndGlyphs">Конвективн.</text>
<text x="15" y="960" font-size="13" textLength="74" lengthAdjust="spacingAndGlyphs">облачность</text>
<text x="39" y="980" font-size="13" textLength="26" lengthAdjust="spacingAndGlyphs">(км)</text>
<g>
<text class="l r" x="111" y="912">12</text><text class="l r" x="111" y="928">10</text><text class="l r" x="111" y="945">8</text><text class="l r" x="111" y="962">6</text><text class="l r" x="111" y="978">4</text><text class="l r" x="111" y="995">2</text><text class="l r" x="111" y="1011">0</text>
<text class="l" x="1228" y="912">12</text><text class="l" x="1228" y="928">10</text><text class="l" x="1228" y="945">8</text><text class="l" x="1228" y="962">6</text><text class="l" x="1228" y="978">4</text><text class="l" x="1228" y="995">2</text><text class="l" x="1228" y="1011">0</text>
</g>
</svg>
</body></html>
